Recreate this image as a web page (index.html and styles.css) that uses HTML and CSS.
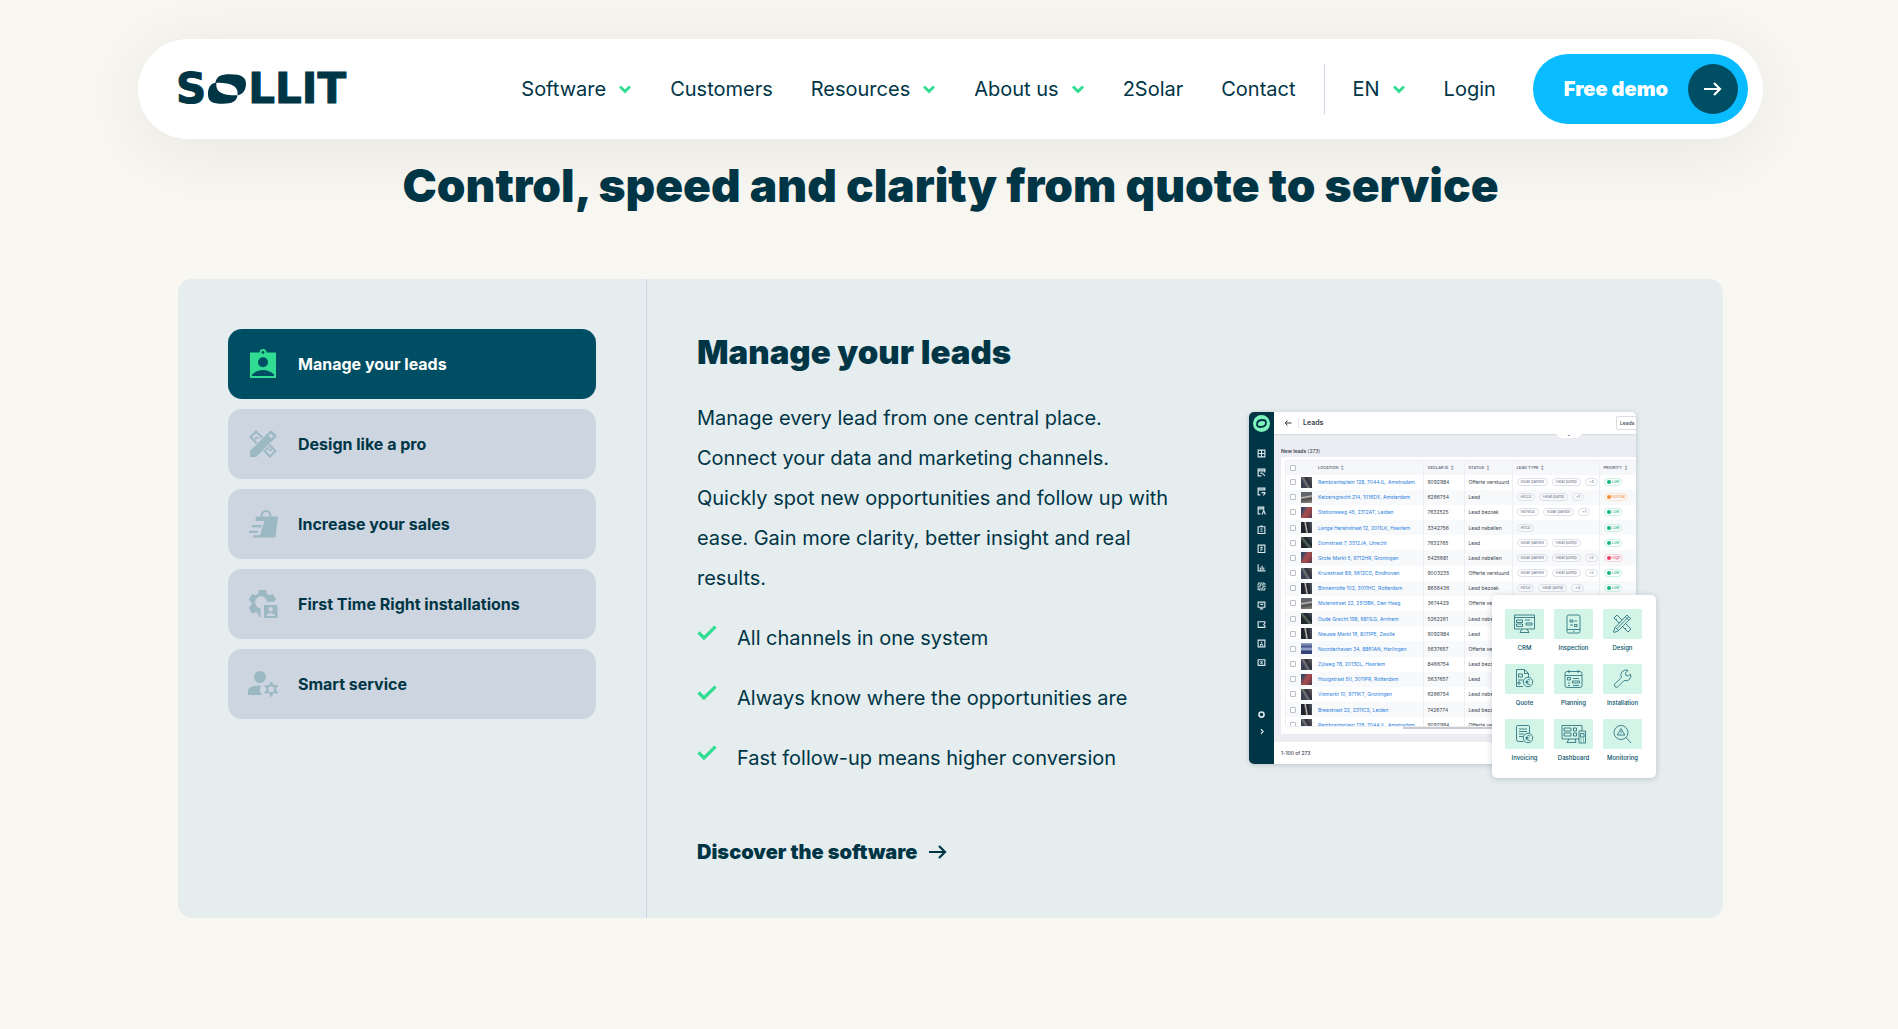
FILE: index.html
```html
<!DOCTYPE html>
<html lang="en">
<head>
<meta charset="utf-8">
<meta name="viewport" content="width=device-width, initial-scale=1">
<title>Sollit – Control, speed and clarity from quote to service</title>
<link rel="stylesheet" href="styles.css">
</head>
<body>
<svg class="sprite" aria-hidden="true">
  <symbol id="chevron" viewBox="0 0 14 9"><path d="M2 1.500 7 6.500l5-5" fill="none" stroke="currentColor" stroke-width="3"/></symbol>
  <symbol id="arrow" viewBox="0 0 18 14"><path d="M0 7h15.500M10 1l6 6-6 6" fill="none" stroke="currentColor" stroke-width="2.200"/></symbol>
  <symbol id="check" viewBox="0 0 20 16"><path d="M1.500 7.500 7 13 18.500 1.700" fill="none" stroke="currentColor" stroke-width="3.200"/></symbol>
</svg>

<header class="header">
  <a class="logo" href="#" aria-label="Sollit">
    <span>S</span>
    <svg class="logo-o" viewBox="0 0 36 28"><path fill="currentColor" fill-rule="evenodd" d="M7 8C8 2 12 0 21 0c11 0 15 3 15 9 0 6-3 10-8 11-1 6-5 8-14 8C4 28 0 26 0 19 0 13 2 9 7 8Zm1 0c-1 8 4 12 20 12 1-8-4-12-20-12Z"/></svg>
    <span>LLIT</span>
  </a>
  <nav class="nav" aria-label="Main">
    <a href="#">Software <svg class="chev"><use href="#chevron"/></svg></a>
    <a href="#">Customers</a>
    <a href="#">Resources <svg class="chev"><use href="#chevron"/></svg></a>
    <a href="#">About us <svg class="chev"><use href="#chevron"/></svg></a>
    <a href="#">2Solar</a>
    <a href="#">Contact</a>
  </nav>
  <div class="account">
    <a href="#">EN <svg class="chev"><use href="#chevron"/></svg></a>
    <a href="#">Login</a>
  </div>
  <a class="demo" href="#">Free demo <span class="demo-dot"><svg class="arrow"><use href="#arrow"/></svg></span></a>
</header>

<main class="main">
  <h1>Control, speed and clarity from quote to service</h1>

  <section class="panel">
    <div class="tabs" role="tablist" aria-label="Topics">
      <button class="tab active" role="tab" aria-selected="true">
        <svg viewBox="0 0 30 30"><path fill="currentColor" fill-rule="evenodd" d="M2 3.500h9.500a3.500 3.500 0 0 1 7 0H28V29H2ZM15 2a1.400 1.400 0 1 0 0 2.800A1.400 1.400 0 0 0 15 2Zm0 6.200a5 5 0 1 0 0 10 5 5 0 0 0 0-10ZM4 27h22v-1.500C23 22.500 19 21 15 21S7 22.500 4 25.500Z"/></svg>
        Manage your leads
      </button>
      <button class="tab" role="tab">
        <svg viewBox="0 0 30 30"><path fill="none" stroke="currentColor" stroke-width="2" d="M2.500 8 8 2.500 27.500 22 22 27.500ZM7 10l2-2M10.500 9.500l-1-1M18 21l3-3M21.500 22l2-2"/><path fill="currentColor" stroke="#ccd5e0" d="M1.500 22 22 1.500q1-.8 2 0L28.500 6q.8 1 0 2L8 28.500H1.500Z"/><path fill="#ccd5e0" d="m20.500 6.500 2-2 3 3-2 2Z"/></svg>
        Design like a pro
      </button>
      <button class="tab" role="tab">
        <svg viewBox="0 0 30 30"><path fill="none" stroke="currentColor" stroke-width="2" d="M13.500 8C13.500 4 15 2 18 2s4.500 2 4.500 6"/><path fill="currentColor" d="M8 7.500h22l-2.600 21H5v-2.200h7L16.500 12H7.500ZM4 16h10l-.7 2.200H4ZM1 21.800h9l-.7 2.200H1Z"/></svg>
        Increase your sales
      </button>
      <button class="tab" role="tab">
        <svg viewBox="0 0 30 30"><path fill="currentColor" d="M11 1h7l.8 3.800 2.400 1.400 3.800-1.200 3 5.200-2 2.500H19a6 6 0 1 0-6.500 6.500V28H11l-.8-3.500-2.500-1.200L4 24.500.8 18.500l2.800-2.700v-2.600L.8 10.500 4 5l3.600 1.200 2.500-1.400Z"/><path fill="currentColor" fill-rule="evenodd" d="M16 16h13.500v13H16Zm6.700 2a2.200 2.200 0 1 0 0 4.400 2.200 2.200 0 0 0 0-4.400Zm-4.500 9h9c-.5-2-2.500-3-4.500-3s-4 1-4.500 3Z"/></svg>
        First Time Right installations
      </button>
      <button class="tab" role="tab">
        <svg viewBox="0 0 30 30"><circle cx="12" cy="8" r="6" fill="currentColor"/><path fill="currentColor" d="M0 26v-4c0-4 6-5.500 13-5.500-1.500 3-1.500 7 1 9.500Z"/><circle cx="23.200" cy="20.200" r="4" fill="none" stroke="currentColor" stroke-width="2.200"/><path fill="none" stroke="currentColor" stroke-width="2.600" d="M23.200 13v3M23.200 24.500v3M17 16.600l2.500 1.500M27 22.400l2.500 1.500M17 23.900l2.500-1.500M27 18.100l2.500-1.500"/></svg>
        Smart service
      </button>
    </div>

    <div class="content" role="tabpanel">
      <div class="copy">
        <h2>Manage your leads</h2>
        <p>Manage every lead from one central place. Connect your data and marketing channels. Quickly spot new opportunities and follow up with ease. Gain more clarity, better insight and real results.</p>
        <ul class="checks">
          <li><svg><use href="#check"/></svg>All channels in one system</li>
          <li><svg><use href="#check"/></svg>Always know where the opportunities are</li>
          <li><svg><use href="#check"/></svg>Fast follow-up means higher conversion</li>
        </ul>
        <a class="discover" href="#">Discover the software <svg class="arrow"><use href="#arrow"/></svg></a>
      </div>

      <div class="preview">
        <div class="app">
          <div class="rail">
            <svg class="rail-logo" viewBox="0 0 17 17"><circle cx="8.500" cy="8.500" r="8.500" fill="#7df5bd"/><path fill="none" stroke="#003546" stroke-width="1.800" d="M4 9.500C4 6 6 5 9.500 5 12 5 13 6 13 7.500c0 3-2 4.500-5.500 4.500C5 12 4 11 4 9.500Z"/></svg>
            <div class="rail-icons">
              <svg viewBox="0 0 8 8"><path d="M1 1h6v6H1ZM4 1v6M1 4h6"/></svg>
              <svg viewBox="0 0 8 8"><path d="M7 4V1H1v6h3M1 2.500h6M3 4.500h2M5 5l2 2"/></svg>
              <svg viewBox="0 0 8 8"><path d="M7 3V1H1v6h2M1 2.500h6M4 5h3v1L5.500 7.500"/></svg>
              <svg viewBox="0 0 8 8"><path d="M6 3V1H1v6h2M1 2.500h5M4.500 7.500 6 4l1.500 3.500"/></svg>
              <svg viewBox="0 0 8 8"><path d="M1 1.500h6v6H1ZM3 1h2M3 3.500h2M3 5.500h2"/></svg>
              <svg viewBox="0 0 8 8"><path d="M1 1h6v6.500H1ZM3 3h2M3 4.500h2M3 6h1"/></svg>
              <svg viewBox="0 0 8 8"><path d="M1 1v6h6.500M3 6V4M4.500 6V2.500M6 6V4"/></svg>
              <svg viewBox="0 0 8 8"><path d="M1 1h6v6H1ZM2.500 2.500h3v3h-3Z" stroke-dasharray="1.500 .5"/></svg>
              <svg viewBox="0 0 8 8"><path d="M1 1h6v4.500H1ZM2.500 7h3M3 3h2.500"/></svg>
              <svg viewBox="0 0 8 8"><path d="M7 3V1.500H1v5h6V5L6 4Z"/></svg>
              <svg viewBox="0 0 8 8"><path d="M1 1h6v6H1ZM3 6c0-2 2-2 2 0M4 2.500v1"/></svg>
              <svg viewBox="0 0 8 8"><path d="M1 1.500h6v5H1ZM3 3l2 2M5 3 3 5"/></svg>
            </div>
            <div class="rail-foot">
              <svg viewBox="0 0 8 8"><circle cx="4" cy="4" r="2.300" stroke-width="1.400"/></svg>
              <svg viewBox="0 0 8 8"><path d="m3.500 2 2 2-2 2"/></svg>
            </div>
          </div>
          <div class="screen">
            <div class="topbar">
              <svg viewBox="0 0 8 8"><path d="M7.500 4H1.500M3.500 1.500 1.200 4l2.300 2.500" fill="none" stroke="#333a44"/></svg>
              <strong>Leads</strong>
              <button class="mini-button">Leads</button>
              <svg class="notch" viewBox="0 0 26 5"><path d="M0 0h26l-4 4H4Z" fill="#fff"/><path d="m12 .8 1 1 1-1" fill="none" stroke="#667"/></svg>
            </div>
            <div class="list-title"><b>New leads</b> (273)</div>
            <div class="sheet">
              <div class="table-wrap">
                <table>
                  <thead><tr><th class="c-check"><input type="checkbox" aria-label="Select all"></th><th class="c-thumb"></th><th class="c-loc">LOCATION &nbsp;↕</th><th class="c-id">2SOLAR ID &nbsp;↕</th><th class="c-status">STATUS &nbsp;↕</th><th class="c-type">LEAD TYPE &nbsp;↕</th><th>PRIORITY &nbsp;↕</th></tr></thead>
                  <tbody>
                    <tr><td><input type="checkbox" aria-label="Select"></td><td><i class="thumb slate"></i></td><td><a href="#">Rembrantsplein 128, 7044JL, Amstradam</a></td><td>9092984</td><td>Offerte verstuurd</td><td><span>Solar panels</span><span>Heat pump</span><span>+4</span></td><td><em class="low">Low</em></td></tr>
                    <tr><td><input type="checkbox" aria-label="Select"></td><td><i class="thumb road"></i></td><td><a href="#">Keizersgracht 214, 1016DX, Amsterdam</a></td><td>6266754</td><td>Lead</td><td><span>AirCo</span><span>Heat pump</span><span>+1</span></td><td><em class="normal">Normal</em></td></tr>
                    <tr><td><input type="checkbox" aria-label="Select"></td><td><i class="thumb brick"></i></td><td><a href="#">Stationsweg 45, 2312AT, Leiden</a></td><td>7632525</td><td>Lead bezoek</td><td><span>Service</span><span>Solar panels</span><span>+1</span></td><td><em class="low">Low</em></td></tr>
                    <tr><td><input type="checkbox" aria-label="Select"></td><td><i class="thumb dark"></i></td><td><a href="#">Lange Herenstraat 12, 2011LK, Haarlem</a></td><td>3342756</td><td>Lead nabellen</td><td><span>Airco</span></td><td><em class="low">Low</em></td></tr>
                    <tr><td><input type="checkbox" aria-label="Select"></td><td><i class="thumb green"></i></td><td><a href="#">Domstraat 7, 3512JA, Utrecht</a></td><td>7632765</td><td>Lead</td><td><span>Solar panels</span><span>Heat pump</span></td><td><em class="low">Low</em></td></tr>
                    <tr><td><input type="checkbox" aria-label="Select"></td><td><i class="thumb brick"></i></td><td><a href="#">Grote Markt 5, 9712HR, Groningen</a></td><td>5425681</td><td>Lead nabellen</td><td><span>Solar panels</span><span>Heat pump</span><span>+2</span></td><td><em class="high">High</em></td></tr>
                    <tr><td><input type="checkbox" aria-label="Select"></td><td><i class="thumb slate"></i></td><td><a href="#">Kruisstraat 89, 5612CD, Eindhoven</a></td><td>9003235</td><td>Offerte verstuurd</td><td><span>Solar panels</span><span>Heat pump</span><span>+2</span></td><td><em class="low">Low</em></td></tr>
                    <tr><td><input type="checkbox" aria-label="Select"></td><td><i class="thumb dark"></i></td><td><a href="#">Binnenrotte 102, 3011HC, Rotterdam</a></td><td>8656436</td><td>Lead bezoek</td><td><span>Airco</span><span>Heat pump</span><span>+3</span></td><td><em class="low">Low</em></td></tr>
                    <tr><td><input type="checkbox" aria-label="Select"></td><td><i class="thumb road"></i></td><td><a href="#">Molenstraat 22, 2513BK, Den Haag</a></td><td>3674429</td><td>Offerte verstuurd</td><td></td><td></td></tr>
                    <tr><td><input type="checkbox" aria-label="Select"></td><td><i class="thumb green"></i></td><td><a href="#">Oude Gracht 198, 6811LG, Arnhem</a></td><td>5262261</td><td>Lead nabellen</td><td></td><td></td></tr>
                    <tr><td><input type="checkbox" aria-label="Select"></td><td><i class="thumb dark"></i></td><td><a href="#">Nieuwe Markt 16, 8011PE, Zwolle</a></td><td>9092984</td><td>Lead</td><td></td><td></td></tr>
                    <tr><td><input type="checkbox" aria-label="Select"></td><td><i class="thumb blue"></i></td><td><a href="#">Noorderhaven 34, 8861AN, Harlingen</a></td><td>5637657</td><td>Offerte verstuurd</td><td></td><td></td></tr>
                    <tr><td><input type="checkbox" aria-label="Select"></td><td><i class="thumb slate"></i></td><td><a href="#">Zijlweg 78, 2013DL, Haarlem</a></td><td>8466754</td><td>Lead bezoek</td><td></td><td></td></tr>
                    <tr><td><input type="checkbox" aria-label="Select"></td><td><i class="thumb brick"></i></td><td><a href="#">Hoogstraat 50, 3011PR, Rotterdam</a></td><td>5637657</td><td>Lead</td><td></td><td></td></tr>
                    <tr><td><input type="checkbox" aria-label="Select"></td><td><i class="thumb slate"></i></td><td><a href="#">Vismarkt 10, 9711KT, Groningen</a></td><td>6266754</td><td>Lead nabellen</td><td></td><td></td></tr>
                    <tr><td><input type="checkbox" aria-label="Select"></td><td><i class="thumb dark"></i></td><td><a href="#">Breestraat 22, 2311CS, Leiden</a></td><td>7426774</td><td>Lead bezoek</td><td></td><td></td></tr>
                    <tr><td><input type="checkbox" aria-label="Select"></td><td><i class="thumb slate"></i></td><td><a href="#">Rembrantsplein 128, 7044JL, Amstradam</a></td><td>9092984</td><td>Offerte verstuurd</td><td></td><td></td></tr>
                  </tbody>
                </table>
              </div>
              <div class="scrollbar"></div>
            </div>
            <div class="pager">1-100 of 273</div>
          </div>
        </div>

        <ul class="modules">
          <li><svg viewBox="0 0 39 30"><path d="M9.500 6h20v14h-20ZM9.500 8.500h20M17 20l-2 3.500h9L22 20M11.500 11h6v2.500h-6ZM11.500 15h6v2.500h-6ZM20 11h5M21 14h6v2h-6Z"/></svg>CRM</li>
          <li><svg viewBox="0 0 39 30"><path d="M14.500 6h10q1.500 0 1.500 1.500v15q0 1.500-1.500 1.500h-10q-1.500 0-1.500-1.500v-15Q13 6 14.500 6ZM13 20.500h13M19 22.200h1.500M16 11h3v2h-3ZM20.500 12H23M16 16h3M20.500 15.500H23v2h-2.500Z"/></svg>Inspection</li>
          <li><svg viewBox="0 0 39 30"><path d="m11 9 3-3 14 14-3 3ZM13 11l1-1M16 14l1-1M22 20l1-1"/><path fill="#d3f5e8" d="m24 6 3.500 3.500L15 22l-4 1.500-.5-.5L12 18.500ZM22.500 8l3 3M12.500 18.500l3 3M25.500 8 14 19.500"/></svg>Design</li>
          <li><svg viewBox="0 0 39 30"><path d="M18 22.500h-6.500v-17h8l4 4V13M19.500 5.500v4h4M13.500 10h4v3h-4ZM13 16h5M13 18h2v2h-2Z"/><circle cx="23" cy="18" r="4.700"/><path d="M25 16q-3-1.500-3.500 2 .5 3.500 3.500 2M20.500 17.500h3M20.500 18.800h3"/></svg>Quote</li>
          <li><svg viewBox="0 0 39 30"><path d="M13 7.500h13q2 0 2 2v12q0 2-2 2H13q-2 0-2-2v-12q0-2 2-2ZM11 11.500h17M15 6v3M24 6v3M13.500 13.500h3v2.500h-3ZM19 14.500h6M18.500 17h7v2h-7ZM14 19h2M14 21.500h2M19 21.500h6"/></svg>Planning</li>
          <li><svg viewBox="0 0 39 30"><path d="M27.500 10a5 5 0 0 1-6.500 6.500L15 22.700q-1.500 1.300-3 0-1.300-1.500 0-3L18.500 13.500A5 5 0 0 1 25 6.500L22.500 9l.5 2.500 2.500.5ZM13.500 21h.1"/></svg>Installation</li>
          <li><svg viewBox="0 0 39 30"><path d="M18.500 22.500h-5q-2 0-2-2V7.500q0-1 1-1h11q1 0 1 1V14M14 10h8M14 12.500h8M14 15h5M14 17.500h4"/><circle cx="23" cy="19" r="4.700"/><path d="M25 17q-3-1.500-3.500 2 .5 3.500 3.500 2M20.500 18.500h3M20.500 19.800h3"/></svg>Invoicing</li>
          <li><svg viewBox="0 0 39 30"><path d="M25 20H8V6.500h20V12M15 20l-2 3.500h9L21 20M10 9h7v3h-7ZM10 14h7v3h-7ZM19.500 9h3v3h-3ZM19.500 14h3v3h-3ZM25 12h6.500v12H25ZM26.500 14.500H30V18h-3.500ZM26.500 20h1M29 20h1M26.500 22h1M29 22h1"/></svg>Dashboard</li>
          <li><svg viewBox="0 0 39 30"><circle cx="18" cy="13.500" r="7"/><path d="m23 18.500 5 5.500M18 9.500l3.800 6.500h-7.600ZM18 11.500v2.500M18 14.800v.5"/></svg>Monitoring</li>
        </ul>
      </div>
    </div>
  </section>
</main>
</body>
</html>
```

FILE: styles.css
```css
:root {
  --ink: #003546;
  --teal: #004e63;
  --green: #30dd92;
  --line: #ccd5e0;
}

* { box-sizing: border-box; }

body {
  margin: 0;
  padding: 39px 0 0 3px;
  background: #f9f7f2;
  color: var(--ink);
  font: 400 20px/40px Inter, "Liberation Sans", sans-serif;
}

a { color: inherit; text-decoration: none; }
button { border: 0; font: inherit; color: inherit; cursor: pointer; }
ul { list-style: none; margin: 0; padding: 0; }
.sprite { position: absolute; width: 0; height: 0; }

/* Header */
.header {
  display: flex;
  align-items: center;
  max-width: 1625px;
  height: 100px;
  margin: 0 auto;
  padding: 0 15px 0 38px;
  border-radius: 50px;
  background: #fff;
  box-shadow: 0 10px 80px rgba(0, 0, 0, .08);
}

.logo {
  display: flex;
  align-items: center;
  gap: 2px;
  margin-right: auto;
  font: 700 42px/40px "DejaVu Sans", sans-serif;
  -webkit-text-stroke: 1px var(--ink);
}
.logo-o { width: 38px; height: 30px; }

.nav, .account { display: flex; align-items: center; gap: 38px; }
.nav a, .account a { display: flex; align-items: center; gap: 12px; }
.account {
  height: 50px;
  margin: 0 37px 0 28px;
  padding-left: 28px;
  border-left: 1px solid var(--line);
}
.chev { width: 14px; height: 9px; color: var(--green); }
.arrow { width: 18px; height: 14px; }

.demo {
  display: flex;
  align-items: center;
  gap: 20px;
  height: 70px;
  padding: 0 10px 0 31px;
  border-radius: 35px;
  background: #08bcff;
  color: #fff;
  font-weight: 900;
}
.demo-dot {
  display: grid;
  place-items: center;
  width: 50px;
  height: 50px;
  border-radius: 50%;
  background: var(--teal);
}

/* Main */
.main { max-width: 1545px; margin: 0 auto; padding-bottom: 111px; }

h1 {
  margin: 16px 0 64px;
  font-size: 46px;
  line-height: 60px;
  font-weight: 900;
  text-align: center;
}

.panel {
  display: grid;
  grid-template-columns: 469px 1fr;
  border-radius: 14px;
  background: #e5edee;
}

.tabs {
  display: flex;
  flex-direction: column;
  gap: 10px;
  padding: 50px;
  border-right: 1px solid var(--line);
}
.tab {
  display: flex;
  align-items: center;
  gap: 20px;
  height: 70px;
  padding: 0 20px;
  border-radius: 14px;
  background: #ccd5e0;
  font-size: 16px;
  line-height: 24px;
  font-weight: 700;
  text-align: left;
}
.tab svg { width: 30px; height: 30px; color: #9bb8c3; }
.tab.active { background: var(--teal); color: #fff; }
.tab.active svg { color: var(--green); }

.content {
  display: grid;
  grid-template-columns: 1fr 424px;
  gap: 64px;
  align-items: center;
  padding: 50px;
}

h2 { margin: 0 0 23px; font-size: 33px; line-height: 46px; font-weight: 900; }
.copy p { margin: 0; }
.checks li { display: flex; gap: 20px; margin-top: 20px; }
.checks svg { width: 20px; height: 16px; margin-top: 7px; color: var(--green); }
.discover {
  display: flex;
  align-items: center;
  gap: 12px;
  margin-top: 58px;
  line-height: 32px;
  font-weight: 900;
}

/* Product preview */
.preview {
  position: relative;
  width: 407px;
  margin-bottom: 8px;
  padding-bottom: 14px;
  font-size: 5px;
  line-height: 8px;
  color: #3b434e;
}
.app {
  display: flex;
  width: 387px;
  border-radius: 5px;
  overflow: hidden;
  background: #fff;
  box-shadow: 0 1px 5px rgba(0, 30, 50, .2);
}
.rail {
  display: flex;
  flex-direction: column;
  align-items: center;
  width: 25px;
  padding: 3px 0 28px;
  background: var(--ink);
}
.rail svg { width: 9px; height: 9px; fill: none; stroke: #dce8ec; stroke-width: 1; }
.rail .rail-logo { width: 17px; height: 17px; stroke: none; }
.rail-icons, .rail-foot { display: flex; flex-direction: column; align-items: center; gap: 10px; }
.rail-icons { margin-top: 17px; }
.rail-foot { margin-top: auto; gap: 8px; }

.screen { flex: 1; min-width: 0; background: #ecedf2; }
.topbar {
  position: relative;
  display: flex;
  align-items: center;
  height: 22px;
  padding-left: 10px;
  background: #fff;
  box-shadow: 0 1px 1px rgba(0, 20, 50, .08);
}
.topbar > svg { width: 8px; height: 8px; }
.topbar strong {
  margin-left: 6px;
  padding-left: 4px;
  border-left: 1px solid #e4e6ea;
  font-size: 7px;
  line-height: 10px;
  font-weight: 600;
}
.mini-button {
  width: 20px;
  height: 14px;
  margin-left: auto;
  padding: 0 0 0 3px;
  border: 1px solid #dcdee4;
  border-right: 0;
  border-radius: 2px 0 0 2px;
  background: #fff;
  font-size: 5px;
  line-height: 8px;
  font-weight: 500;
  text-align: left;
}
.topbar .notch { position: absolute; right: 54px; top: 22px; width: 26px; height: 5px; }
.list-title { padding: 13px 0 2px 7px; }
.list-title b { font-weight: 600; }

.sheet { height: 277px; margin: 0 0 8px 7px; padding: 3px 0 0 4px; background: #fff; }
.table-wrap {
  height: 267px;
  overflow: hidden;
  border: 1px solid #edeff3;
  border-right: 0;
  border-radius: 3px 0 0 3px;
}
.scrollbar { width: 150px; height: 2px; margin-left: 118px; background: #c9cbd0; }

table { width: 100%; height: 272px; border-collapse: collapse; table-layout: fixed; }
th, td { padding: 0; text-align: left; white-space: nowrap; }
th { height: 14px; background: #f6f7fb; font-size: 4px; font-weight: 600; color: #6a7280; }
tbody tr:nth-child(even) { background: #f8f9fb; }
th:nth-child(n+4), td:nth-child(n+4) { padding-left: 4px; border-left: 1px solid #edeff3; }
.c-check { width: 15px; }
.c-thumb { width: 17px; }
.c-loc { width: 105px; }
.c-id { width: 41px; }
.c-status { width: 48px; }
.c-type { width: 87px; }
td a { color: #2b82dd; }
td:last-child, td:nth-child(6) { font-size: 4px; }

input[type="checkbox"] {
  display: block;
  appearance: none;
  width: 6px;
  height: 6px;
  margin: 0 0 0 4px;
  border: 1px solid #b9bec7;
  border-radius: 1px;
  background: #fff;
}

.thumb { display: block; width: 11px; height: 11px; }
.slate { background: linear-gradient(60deg, #3a4152 30%, #777 45%, #2c3040 60%, #69605c); }
.road { background: linear-gradient(170deg, #62656b 35%, #c1bdb4 45%, #4a4b50 60%, #928b7d); }
.brick { background: linear-gradient(120deg, #3d4560 20%, #a74e50 45%, #8d4148 75%, #394054); }
.dark { background: linear-gradient(80deg, #20252f 35%, #c8c2b8 48%, #1d2029 58%, #545863); }
.green { background: linear-gradient(50deg, #20262c 30%, #566a5c 48%, #1b2229 60%, #4a5560); }
.blue { background: linear-gradient(0deg, #34427a 25%, #a9b6d8 45%, #47548a 65%, #9ba8ca); }

td span, td em {
  display: inline-block;
  margin-right: 4px;
  padding: 0 3px;
  border: 1px solid #dfe1ea;
  border-radius: 4px;
  line-height: 6px;
  font-style: normal;
}
td span { color: #646a80; }
td em { padding: 0 2px; }
td em::before {
  content: "";
  display: inline-block;
  width: 4px;
  height: 4px;
  margin-right: 1px;
  border-radius: 50%;
  background: currentColor;
  vertical-align: -1px;
}
.low { color: #12b57f; border-color: #c9f1e2; }
.normal { color: #f58b2a; border-color: #fde6cf; }
.high { color: #ee3d62; border-color: #fbd3dc; }

.pager { height: 22px; padding: 7px; background: #fff; font-weight: 500; }

.modules {
  position: absolute;
  right: 0;
  bottom: 0;
  display: grid;
  grid-template-columns: repeat(3, 39px);
  gap: 10px;
  width: 164px;
  height: 183px;
  padding: 14px 13px;
  border-radius: 5px;
  background: #fff;
  box-shadow: 0 1px 6px rgba(0, 30, 50, .2);
  color: var(--teal);
  font-size: 6px;
  line-height: 9px;
  font-weight: 500;
}
.modules li { display: flex; flex-direction: column; align-items: center; gap: 4px; height: 45px; white-space: nowrap; }
.modules svg { width: 39px; height: 30px; flex: none; border-radius: 1px; background: #d3f5e8; fill: none; stroke: #1d6675; stroke-width: .8; }
```
